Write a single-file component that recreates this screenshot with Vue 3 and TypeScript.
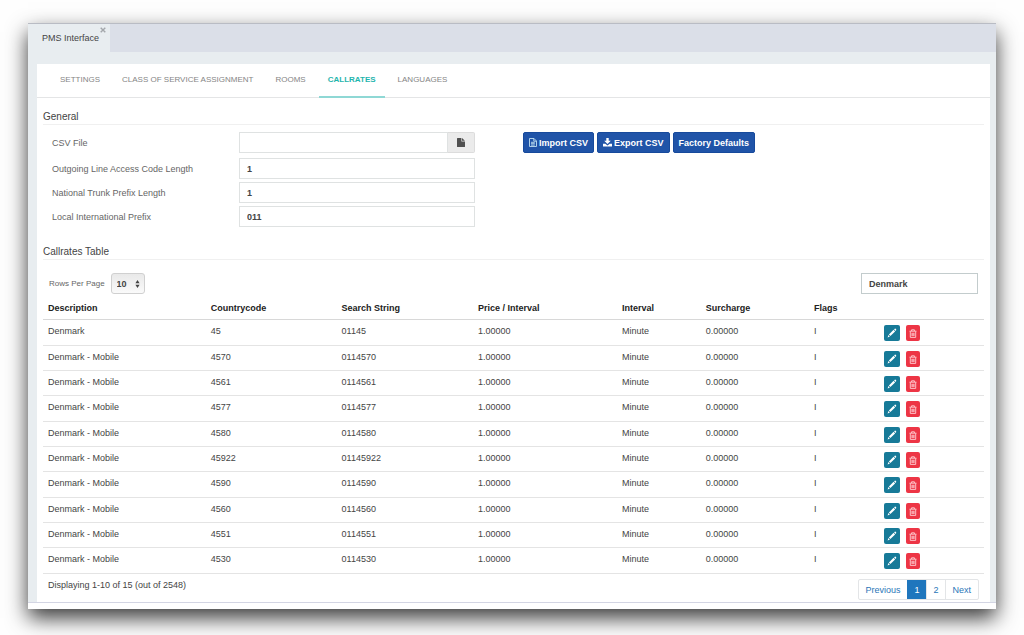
<script setup lang="ts">
import { ref } from 'vue'

interface Callrate {
  description: string
  code: string
  search: string
}

interface Field {
  id: string
  label: string
  value: string
}

const tabs = ['Settings', 'Class of Service Assignment', 'Rooms', 'Callrates', 'Languages']
const activeTab = ref('Callrates')

const csvFile = ref('')
const fields = ref<Field[]>([
  { id: 'access-length', label: 'Outgoing Line Access Code Length', value: '1' },
  { id: 'trunk-length', label: 'National Trunk Prefix Length', value: '1' },
  { id: 'intl-prefix', label: 'Local International Prefix', value: '011' },
])

const rowsPerPage = ref('10')
const filter = ref('Denmark')

const columns = [
  { key: 'description', title: 'Description' },
  { key: 'code', title: 'Countrycode' },
  { key: 'search', title: 'Search String' },
  { key: 'price', title: 'Price / Interval' },
  { key: 'interval', title: 'Interval' },
  { key: 'surcharge', title: 'Surcharge' },
  { key: 'flags', title: 'Flags' },
  { key: 'actions-head', title: '' },
]

const codes = ['45', '4570', '4561', '4577', '4580', '45922', '4590', '4560', '4551', '4530']
const rows: Callrate[] = codes.map((code, i) => ({
  description: i === 0 ? 'Denmark' : 'Denmark - Mobile',
  code,
  search: '011' + code,
}))
</script>

<template>
  <div class="window">
    <header class="tabbar">
      <div class="window-tab">
        <span>PMS Interface</span>
        <button class="close" type="button" aria-label="Close tab">
          <svg viewBox="0 0 6 6" width="6" height="6"><path d="M.7.7l4.6 4.6M5.3.7L.7 5.3" stroke="#a3a7ab" stroke-width="1.4" /></svg>
        </button>
      </div>
    </header>

    <main class="body">
      <div class="panel">
        <nav class="tabs">
          <a
            v-for="tab in tabs"
            :key="tab"
            href="#"
            :class="{ active: tab === activeTab }"
            @click.prevent="activeTab = tab"
          >{{ tab }}</a>
        </nav>

        <div class="content">
          <h2>General</h2>
          <div class="general">
            <form class="form" @submit.prevent>
              <div class="row csv">
                <label for="csv">CSV File</label>
                <div class="file">
                  <input id="csv" v-model="csvFile" type="text">
                  <button type="button" aria-label="Choose file">
                    <svg viewBox="0 0 8 9" width="8" height="9"><path d="M.6 0H4.4V3.4H8V8.4Q8 9 7.4 9H.6Q0 9 0 8.4V.6Q0 0 .6 0zM5 .1L7.9 2.8H5z" fill="#505050" /></svg>
                  </button>
                </div>
              </div>
              <div v-for="field in fields" :key="field.id" class="row">
                <label :for="field.id">{{ field.label }}</label>
                <input :id="field.id" v-model="field.value" type="text">
              </div>
            </form>
            <div class="buttons">
              <button type="button">
                <svg viewBox="0 0 8 9" width="8" height="9" fill="none" stroke="#bfe0f0" stroke-width=".9"><path d="M.5.5H5L7.5 3V8.5H.5zM4.8.5V3.2H7.5M2 4.3h3.8M2 5.7h3.8M2 7.1h3.8" /></svg>
                Import CSV
              </button>
              <button type="button">
                <svg viewBox="0 0 9 9" width="9" height="9" fill="#fff"><path d="M3.3 0h2.4v2.8h2.1L4.5 6.1 1.2 2.8h2.1zM0 5.8h2.3l2.2 1.8 2.2-1.8H9V8.6H0z" /></svg>
                Export CSV
              </button>
              <button type="button">Factory Defaults</button>
            </div>
          </div>

          <h2>Callrates Table</h2>
          <div class="tools">
            <label for="rows">Rows Per Page</label>
            <div class="select">
              <select id="rows" v-model="rowsPerPage">
                <option>10</option>
                <option>25</option>
                <option>50</option>
              </select>
              <svg viewBox="0 0 5 8" width="5" height="8" fill="#444"><path d="M2.5 0L4.6 3.2H.4zM2.5 8L.4 4.8h4.2z" /></svg>
            </div>
            <input v-model="filter" class="filter" type="text" aria-label="Search">
          </div>

          <table>
            <thead>
              <tr>
                <th v-for="col in columns" :key="col.key" :class="col.key">{{ col.title }}</th>
              </tr>
            </thead>
            <tbody>
              <tr v-for="row in rows" :key="row.code">
                <td>{{ row.description }}</td>
                <td>{{ row.code }}</td>
                <td>{{ row.search }}</td>
                <td>1.00000</td>
                <td>Minute</td>
                <td>0.00000</td>
                <td>I</td>
                <td>
                  <div class="actions">
                    <button class="edit" type="button" aria-label="Edit">
                      <svg viewBox="0 0 10 10" width="10" height="10" fill="#fff"><path d="M.6 9.4L1.4 7 2.9 8.6zM1.9 6.5L6.6 1.8 8.1 3.4 3.4 8.1zM7.1 1.4L7.7.8Q8.3.3 8.9.9 9.6 1.6 9.1 2.2L8.6 2.9z" /></svg>
                    </button>
                    <button class="delete" type="button" aria-label="Delete">
                      <svg viewBox="0 0 8 9" width="8" height="9" fill="none" stroke="#ffd0d5" stroke-width=".9"><path d="M.5 2.2h7M2.6 2V.8h2.8V2M1.3 2.4V8.4h5.4V2.4M3 3.8v3.3M4 3.8v3.3M5 3.8v3.3" /></svg>
                    </button>
                  </div>
                </td>
              </tr>
            </tbody>
          </table>

          <footer class="foot">
            <span>Displaying 1-10 of 15 (out of 2548)</span>
            <nav class="pages" aria-label="Pages">
              <a href="#">Previous</a>
              <a href="#" class="current">1</a>
              <a href="#">2</a>
              <a href="#">Next</a>
            </nav>
          </footer>
        </div>
      </div>
    </main>
  </div>
</template>

<style>
body {
  background: #fefefe;
}
</style>

<style scoped>
* {
  box-sizing: border-box;
}

.window {
  margin: 23px 28px 26px;
  padding-bottom: 6px;
  background: #fff;
  box-shadow: 0 9px 20px rgba(0, 0, 0, 0.78);
  font: 9px/12px "Liberation Sans", Arial, sans-serif;
  color: #444;
}

input,
select,
button {
  font: inherit;
  color: inherit;
  margin: 0;
}

button {
  cursor: pointer;
}

svg {
  display: block;
  flex: none;
}

.tabbar {
  display: flex;
  height: 29px;
  background: #dbdfe8;
  border-top: 1px solid #b9bcc4;
}

.window-tab {
  display: flex;
  align-items: flex-start;
  gap: 1px;
  height: 28px;
  padding: 3px 4px 0 14px;
  background: #e8edf0;
}

.window-tab span {
  padding-top: 5px;
}

.close {
  padding: 0;
  border: 0;
  background: none;
}

.body {
  padding: 12px 6px 0 9px;
  background: #e8edf0;
  border-bottom: 1px solid #d3d5e3;
}

.panel {
  background: #fff;
}

.tabs {
  display: flex;
  gap: 4px;
  height: 34px;
  padding-left: 14px;
  border-bottom: 1px solid #e4e5e6;
  font-size: 8px;
}

.tabs a {
  height: 34px;
  padding: 10px 9px 0;
  color: #858585;
  text-transform: uppercase;
  text-decoration: none;
}

.tabs a.active {
  color: #1fb5ad;
  font-weight: bold;
  border-bottom: 2px solid #8fd8d5;
}

.content {
  padding: 13px 6px 2px;
}

h2 {
  margin: 0;
  padding-bottom: 1px;
  border-bottom: 1px solid #f0f0f0;
  font-size: 10px;
  line-height: 12px;
  font-weight: normal;
  color: #444;
}

.general {
  display: flex;
  gap: 48px;
  padding: 7px 0 19px 9px;
}

.form {
  display: flex;
  flex-direction: column;
  gap: 3px;
  width: 423px;
}

.row {
  display: flex;
  align-items: center;
  color: #666;
}

.row.csv {
  margin-bottom: 2px;
}

.row label {
  flex: 1;
}

.row > input,
.file {
  width: 236px;
}

.row input,
.filter {
  height: 21px;
  padding: 0 7px;
  border: 1px solid #dfe2e2;
  background: #fff;
  color: #444;
  font-weight: bold;
}

.file {
  display: flex;
}

.file input {
  flex: 1;
  min-width: 0;
}

.file button {
  display: grid;
  place-items: center;
  width: 27px;
  padding: 0;
  border: 1px solid #dcdcdc;
  border-left: 0;
  border-radius: 0 2px 2px 0;
  background: #ebebeb;
}

.buttons {
  display: flex;
  align-items: flex-start;
  gap: 3px;
}

.buttons button {
  display: flex;
  align-items: center;
  gap: 2px;
  height: 21px;
  padding: 0 5px;
  border: 1px solid #174a9c;
  border-radius: 2px;
  background: #2054a8;
  color: #fff;
  font-weight: bold;
}

.tools {
  display: flex;
  align-items: center;
  gap: 6px;
  padding: 13px 6px 0;
  color: #666;
}

.tools label {
  font-size: 8px;
}

.select {
  display: flex;
  align-items: center;
  width: 34px;
  height: 21px;
  padding-right: 4px;
  border: 1px solid #d0d0d0;
  border-radius: 3px;
  background: linear-gradient(#e9e9e9, #fafafa);
}

.select select {
  appearance: none;
  flex: 1;
  min-width: 0;
  padding: 0 0 0 5px;
  border: 0;
  background: none;
  color: #444;
  font-weight: bold;
}

.filter {
  width: 117px;
  margin-left: auto;
  border-color: #c3cccd;
}

table {
  width: 100%;
  table-layout: fixed;
  border-collapse: separate;
  border-spacing: 0;
}

th {
  height: 26px;
  padding: 8px 0 5px 5px;
  border-bottom: 1px solid #d8d8d8;
  text-align: left;
  color: #222;
}

.description { width: 17.3%; }
.code { width: 13.9%; }
.search { width: 14.5%; }
.price { width: 15.3%; }
.interval { width: 8.9%; }
.surcharge { width: 11.5%; }
.flags { width: 7.4%; }

td {
  height: 25px;
  padding: 5px 0 0 5px;
  border-bottom: 1px solid #e4e4e4;
  vertical-align: top;
}

tr:nth-child(3n + 1) td {
  height: 26px;
}

.actions {
  display: flex;
  gap: 6px;
}

.actions button {
  display: grid;
  place-items: center;
  height: 16px;
  padding: 0;
  border: 0;
  border-radius: 2px;
}

.actions .edit {
  width: 16px;
  background: #177a98;
}

.actions .delete {
  width: 14px;
  background: #ed3545;
}

.foot {
  display: flex;
  justify-content: space-between;
  align-items: flex-start;
  padding: 5px 5px 0;
}

.pages {
  display: flex;
  border: 1px solid #e3e5e7;
  border-radius: 2px;
}

.pages a {
  padding: 4px 7px 3px 6px;
  color: #2a76b8;
  text-decoration: none;
}

.pages a + a {
  border-left: 1px solid #e3e5e7;
}

.pages a.current {
  background: #1f76bd;
  border-color: #1f76bd;
  color: #fff;
}
</style>
